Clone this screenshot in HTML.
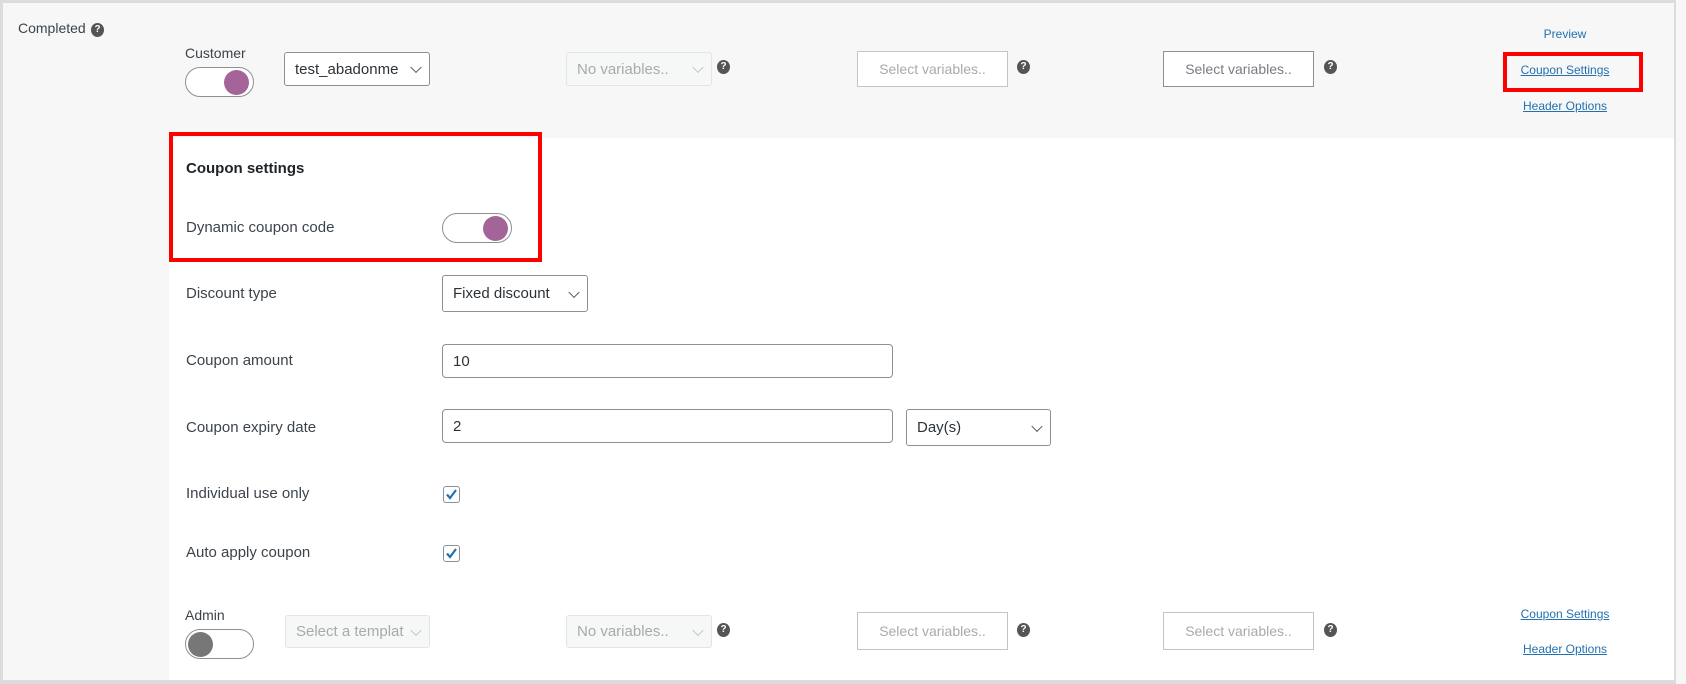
<!DOCTYPE html>
<html><head><meta charset="utf-8"><style>
*{box-sizing:border-box;margin:0;padding:0}
body{width:1686px;height:684px;background:#fff;position:relative;overflow:hidden;font-family:"Liberation Sans",sans-serif;color:#3c434a;font-size:15px}
.a{position:absolute}
.lbl{position:absolute;font-size:15px;color:#3c434a;white-space:nowrap}
.sel{position:absolute;border:1px solid #8c8f94;border-radius:3px;background:#fff;font-size:15px;color:#2c3338;padding-left:10px;display:flex;align-items:center;white-space:nowrap;overflow:hidden}
.sel.dis{border-color:#e2e4e7;background:#f6f7f7;color:#a7aaad}
.box{position:absolute;border:1px solid #c3c4c7;background:#fff;font-size:14px;color:#a7aaad;display:flex;align-items:center;justify-content:center;white-space:nowrap}
.chev{position:absolute;right:9px;top:50%;width:8px;height:8px;border-right:1.6px solid #50575e;border-bottom:1.6px solid #50575e;transform:translateY(-70%) rotate(45deg)}
.dis .chev{border-color:#c3c4c7}
.q{position:absolute;width:13px;height:14px;border-radius:50%;background:#555;color:#fff;font-size:10px;font-weight:bold;text-align:center;line-height:14px}
.tog{position:absolute;border:1px solid #8c8f94;border-radius:16px;background:#fff}
.knob{position:absolute;border-radius:50%;background:#a46497}
.inp{position:absolute;border:1px solid #8c8f94;border-radius:4px;background:#fff;font-size:15px;color:#2c3338;padding-left:10px;display:flex;align-items:center}
.lnk{position:absolute;font-size:12px;color:#2271b1;text-decoration:underline;white-space:nowrap;transform:translateX(-50%)}
.cb{position:absolute;width:17px;height:17px;border:1px solid #8c8f94;border-radius:3px;background:#fff}
.red{position:absolute;border:4px solid #f00}
</style></head><body>
<div class="a" style="left:0;top:0;width:1686px;height:138px;background:#f7f7f7"></div>
<div class="a" style="left:0;top:0;width:169px;height:684px;background:#f7f7f7"></div>
<div class="a" style="left:0;top:0;width:1676px;height:3px;background:#dcdcde"></div>
<div class="a" style="left:0;top:0;width:3px;height:684px;background:#dcdcde"></div>
<div class="a" style="left:1674px;top:0;width:2px;height:684px;background:#dcdcde"></div>
<div class="a" style="left:1676px;top:0;width:10px;height:684px;background:#f7f7f7"></div>
<div class="a" style="left:0;top:680px;width:1676px;height:4px;background:#dcdcde"></div>

<div class="lbl" style="left:18px;top:20px;font-size:14px">Completed</div>
<div class="q" style="left:91px;top:23px">?</div>

<div class="lbl" style="left:185px;top:45px;font-size:14px">Customer</div>
<div class="tog" style="left:185px;top:67px;width:69px;height:30px"><div class="knob" style="left:38px;top:2px;width:25px;height:25px"></div></div>
<div class="sel" style="left:284px;top:52px;width:146px;height:34px">test_abadonme<span class="chev"></span></div>
<div class="sel dis" style="left:566px;top:52px;width:146px;height:34px">No variables..<span class="chev"></span></div>
<div class="q" style="left:717px;top:60px">?</div>
<div class="box" style="left:857px;top:51px;width:151px;height:36px">Select variables..</div>
<div class="q" style="left:1017px;top:60px">?</div>
<div class="box" style="left:1163px;top:51px;width:151px;height:36px;border-color:#8c8f94;color:#787c82">Select variables..</div>
<div class="q" style="left:1324px;top:60px">?</div>
<div class="lnk" style="left:1565px;top:27px;text-decoration:none">Preview</div>
<div class="red" style="left:1503px;top:52px;width:140px;height:40px"></div>
<div class="lnk" style="left:1565px;top:63px">Coupon Settings</div>
<div class="lnk" style="left:1565px;top:99px">Header Options</div>

<div class="red" style="left:169px;top:132px;width:373px;height:130px"></div>
<div class="lbl" style="left:186px;top:160px;font-weight:bold;color:#1d2327">Coupon settings</div>
<div class="lbl" style="left:186px;top:219px">Dynamic coupon code</div>
<div class="tog" style="left:442px;top:213px;width:70px;height:30px"><div class="knob" style="left:40px;top:2px;width:25px;height:25px"></div></div>

<div class="lbl" style="left:186px;top:285px">Discount type</div>
<div class="sel" style="left:442px;top:275px;width:146px;height:37px">Fixed discount<span class="chev"></span></div>
<div class="lbl" style="left:186px;top:352px">Coupon amount</div>
<div class="inp" style="left:442px;top:344px;width:451px;height:34px">10</div>
<div class="lbl" style="left:186px;top:419px">Coupon expiry date</div>
<div class="inp" style="left:442px;top:409px;width:451px;height:34px">2</div>
<div class="sel" style="left:906px;top:409px;width:145px;height:37px">Day(s)<span class="chev"></span></div>
<div class="lbl" style="left:186px;top:485px">Individual use only</div>
<div class="cb" style="left:443px;top:486px"><svg width="15" height="15" viewBox="0 0 15 15" style="position:absolute;left:0;top:0"><path d="M3 7.5 L6 11 L12 3" stroke="#2271b1" stroke-width="2.2" fill="none"/></svg></div>
<div class="lbl" style="left:186px;top:544px">Auto apply coupon</div>
<div class="cb" style="left:443px;top:545px"><svg width="15" height="15" viewBox="0 0 15 15" style="position:absolute;left:0;top:0"><path d="M3 7.5 L6 11 L12 3" stroke="#2271b1" stroke-width="2.2" fill="none"/></svg></div>

<div class="lbl" style="left:185px;top:607px;font-size:14px">Admin</div>
<div class="tog" style="left:185px;top:629px;width:69px;height:30px"><div class="knob" style="left:2px;top:2px;width:25px;height:25px;background:#777"></div></div>
<div class="sel dis" style="left:285px;top:615px;width:145px;height:33px">Select a templat<span class="chev"></span></div>
<div class="sel dis" style="left:566px;top:615px;width:146px;height:33px">No variables..<span class="chev"></span></div>
<div class="q" style="left:717px;top:623px">?</div>
<div class="box" style="left:857px;top:612px;width:151px;height:38px">Select variables..</div>
<div class="q" style="left:1017px;top:623px">?</div>
<div class="box" style="left:1163px;top:612px;width:151px;height:38px">Select variables..</div>
<div class="q" style="left:1324px;top:623px">?</div>
<div class="lnk" style="left:1565px;top:607px">Coupon Settings</div>
<div class="lnk" style="left:1565px;top:642px">Header Options</div>
</body></html>
